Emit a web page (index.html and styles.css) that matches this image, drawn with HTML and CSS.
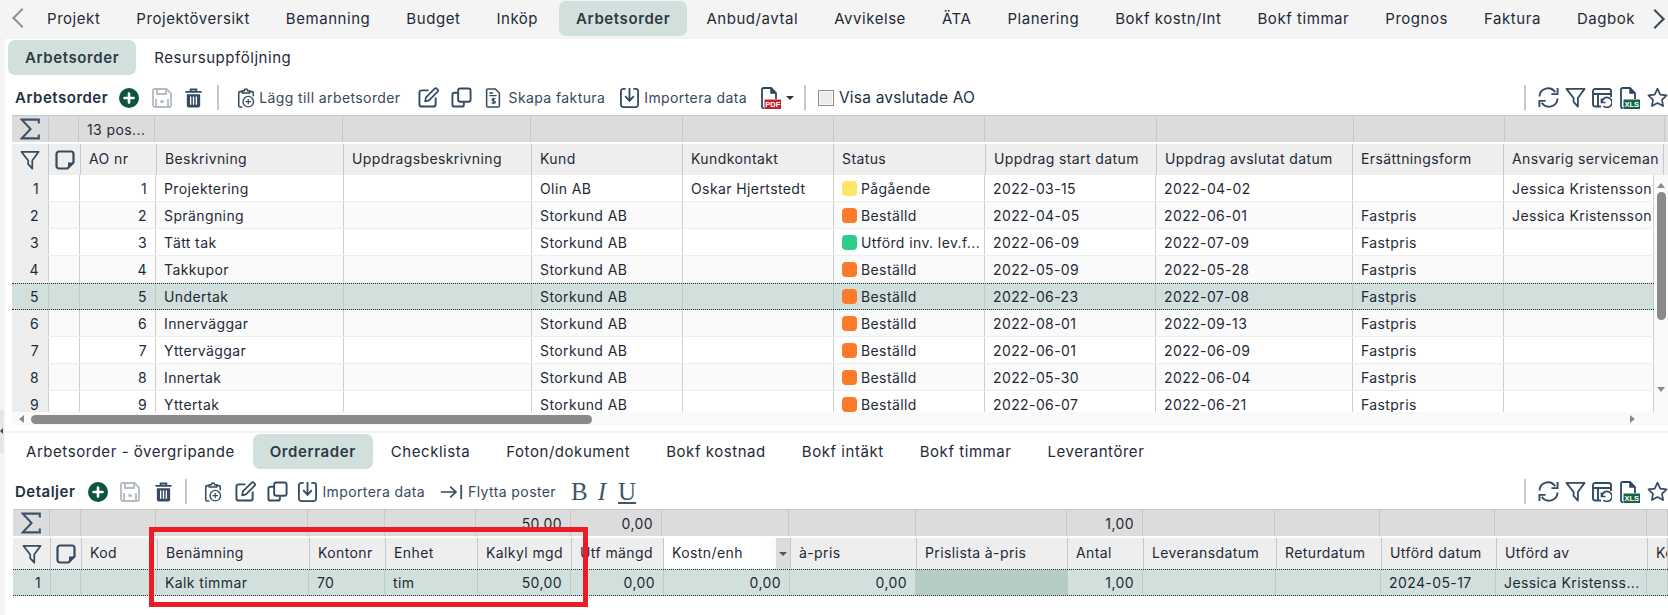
FILE: index.html
```html
<!DOCTYPE html>
<html lang="sv">
<head>
<meta charset="utf-8">
<title>Arbetsorder</title>
<link rel="stylesheet" href="styles.css">
</head>
<body>
<svg class="defs" width="0" height="0" aria-hidden="true">
  <symbol id="i-plus" viewBox="0 0 20 20"><circle cx="10" cy="10" r="10" fill="#0e5540"/><path d="M10 5.500v9M5.500 10h9" stroke="#fff" stroke-width="2.600" stroke-linecap="round"/></symbol>
  <symbol id="i-save" viewBox="0 0 20 20"><path d="M2.500 1h12l4.500 4.500V17a2 2 0 0 1-2 2H3a2 2 0 0 1-2-2V2.500A1.500 1.500 0 0 1 2.500 1zM5 1.500v4.500h9V1.500M4 11v8M16 11v8" fill="none" stroke="#b2bac4" stroke-width="1.800"/><circle cx="10" cy="13.500" r="1.800" fill="#b2bac4"/></symbol>
  <symbol id="i-trash" viewBox="0 0 20 20"><path d="M7 2.500V1h6v1.500M1.500 3.500h17" fill="none" stroke="#344b62" stroke-width="2"/><path d="M3 6h14v12a2 2 0 0 1-2 2H5a2 2 0 0 1-2-2z" fill="#344b62"/><path d="M7 8.500v8.500M10 8.500v8.500M13 8.500v8.500" stroke="#fff" stroke-width="1.400"/></symbol>
  <symbol id="i-clip" viewBox="0 0 20 22"><path d="M6 4H3.500A1.500 1.500 0 0 0 2 5.500v14A1.500 1.500 0 0 0 3.500 21H6M14 4h2.500A1.500 1.500 0 0 1 18 5.500V9" fill="none" stroke="#344b62" stroke-width="1.700"/><path d="M6 5.500V3h2.200a1.800 1.800 0 0 1 3.600 0H14v2.500z" fill="none" stroke="#344b62" stroke-width="1.700"/><circle cx="12.500" cy="15" r="5.800" fill="#fff" stroke="#344b62" stroke-width="1.500"/><path d="M12.500 12v6M9.500 15h6" stroke="#344b62" stroke-width="1.300"/></symbol>
  <symbol id="i-edit" viewBox="0 0 22 22"><path d="M11 3.500H4a2.500 2.500 0 0 0-2.500 2.500v12A2.500 2.500 0 0 0 4 20.500h12a2.500 2.500 0 0 0 2.500-2.500v-7" fill="none" stroke="#344b62" stroke-width="2"/><path d="M7.500 15l.8-4.200L17.500 1.700a1.500 1.500 0 0 1 2.100 0l1 1a1.500 1.500 0 0 1 0 2.100L11.500 14z" fill="#fff" stroke="#344b62" stroke-width="1.800" stroke-linejoin="round"/></symbol>
  <symbol id="i-copy" viewBox="0 0 22 22"><rect x="7.500" y="1.500" width="13" height="14" rx="2.200" fill="none" stroke="#344b62" stroke-width="2"/><path d="M7 6H3.500a2 2 0 0 0-2 2v10.500a2 2 0 0 0 2 2h8a2 2 0 0 0 2-2V16" fill="none" stroke="#344b62" stroke-width="2"/></symbol>
  <symbol id="i-bill" viewBox="0 0 16 22"><path d="M2.500 1h8L15 5.500V19.500a1.500 1.500 0 0 1-1.500 1.500h-11A1.500 1.500 0 0 1 1 19.500v-17A1.500 1.500 0 0 1 2.500 1z" fill="none" stroke="#344b62" stroke-width="1.700"/><path d="M4 5.500h4M4 8.500h8" stroke="#344b62" stroke-width="1.400"/><path d="M10.600 12.300c-.5-.8-3.800-1-3.800.6 0 1.800 3.900.8 3.900 2.700 0 1.600-3.500 1.400-4.100.5M8.500 10.800v7" fill="none" stroke="#344b62" stroke-width="1.300"/></symbol>
  <symbol id="i-import" viewBox="0 0 20 22"><path d="M6 2H3.500A2.500 2.500 0 0 0 1 4.500v14A2.500 2.500 0 0 0 3.500 21h13a2.500 2.500 0 0 0 2.500-2.500v-14A2.500 2.500 0 0 0 16.500 2H14" fill="none" stroke="#344b62" stroke-width="1.900"/><path d="M10 1v13M5.500 9.500 10 14.500l4.500-5" fill="none" stroke="#344b62" stroke-width="1.900"/></symbol>
  <symbol id="i-pdf" viewBox="0 0 20 22"><path d="M3 21.500A2 2 0 0 1 1 19.500v-17A1.500 1.500 0 0 1 2.500 1h7.500l5 5v6" fill="none" stroke="#2d4660" stroke-width="1.800"/><path d="M10 1v5h5" fill="#2d4660" stroke="#2d4660" stroke-width="1.500"/><rect x="3.500" y="12.500" width="16.500" height="9.500" fill="#c8202b"/><text x="11.800" y="20.300" text-anchor="middle" font-family="Liberation Sans" font-size="7.500" font-weight="700" fill="#fff">PDF</text></symbol>
  <symbol id="i-xls" viewBox="0 0 20 22"><path d="M3 21.500A2 2 0 0 1 1 19.500v-17A1.500 1.500 0 0 1 2.500 1h7.500l5 5v6" fill="none" stroke="#2d4660" stroke-width="1.800"/><path d="M10 1v5h5" fill="#2d4660" stroke="#2d4660" stroke-width="1.500"/><rect x="3.500" y="12.500" width="16.500" height="9.500" fill="#186447"/><text x="11.800" y="20.300" text-anchor="middle" font-family="Liberation Sans" font-size="7.500" font-weight="700" fill="#fff">XLS</text></symbol>
  <symbol id="i-refresh" viewBox="0 0 22 22"><path d="M1.500 10A9 9 0 0 1 18 5.500M20.500 12A9 9 0 0 1 4 16.500" fill="none" stroke="#344b62" stroke-width="2"/><path d="M20.500 1v6.500H14M1.500 21v-6.500H8" fill="none" stroke="#344b62" stroke-width="2"/></symbol>
  <symbol id="i-filter" viewBox="0 0 22 22"><path d="M1.500 2h19L13.500 11.500V20.500L9 15.500V11.500z" fill="none" stroke="#344b62" stroke-width="1.900" stroke-linejoin="round"/></symbol>
  <symbol id="i-cal" viewBox="0 0 20 20"><path d="M9 18.500H3a2 2 0 0 1-2-2V3a2 2 0 0 1 2-2h14a2 2 0 0 1 2 2v6M1 6h18M6 6v12.500" fill="none" stroke="#344b62" stroke-width="1.900"/><path d="M9.500 10.500v4H13.500M10 14.500a5 5 0 1 1 1.500 3.500" fill="none" stroke="#344b62" stroke-width="1.700"/></symbol>
  <symbol id="i-star" viewBox="0 0 22 22"><path d="M11 1.800l2.900 6.100 6.600.9-4.800 4.600 1.200 6.600-5.900-3.200-5.900 3.200 1.200-6.600L1.500 8.800l6.600-.9z" fill="none" stroke="#344b62" stroke-width="1.800" stroke-linejoin="round"/></symbol>
  <symbol id="i-sigma" viewBox="0 0 18 20"><path d="M17 5V1.500H1.500L9.500 10 1.500 18.500H17V15" fill="none" stroke="#3c5269" stroke-width="1.900"/></symbol>
  <symbol id="i-note" viewBox="0 0 20 20"><path d="M12.500 18.500H4A2.500 2.500 0 0 1 1.500 16V4A2.500 2.500 0 0 1 4 1.500h12A2.500 2.500 0 0 1 18.500 4v8.500z" fill="none" stroke="#344b62" stroke-width="2.200" stroke-linejoin="round"/><path d="M13 18v-5.500h5.500z" fill="#344b62"/></symbol>
  <symbol id="i-move" viewBox="0 0 26 18"><path d="M1 9h17M11.500 3 18 9l-6.500 6" fill="none" stroke="#344b62" stroke-width="1.900"/><path d="M24 1v16" stroke="#344b62" stroke-width="2"/></symbol>
</svg>
<div class="page">
  <nav class="topbar">
    <span class="chev chev-left"></span>
    <a class="tab tab-first">Projekt</a>
    <a class="tab">Projektöversikt</a>
    <a class="tab">Bemanning</a>
    <a class="tab">Budget</a>
    <a class="tab">Inköp</a>
    <a class="tab active">Arbetsorder</a>
    <a class="tab">Anbud/avtal</a>
    <a class="tab">Avvikelse</a>
    <a class="tab">ÄTA</a>
    <a class="tab">Planering</a>
    <a class="tab">Bokf kostn/Int</a>
    <a class="tab">Bokf timmar</a>
    <a class="tab">Prognos</a>
    <a class="tab">Faktura</a>
    <a class="tab">Dagbok</a>
    <span class="chev chev-right"></span>
  </nav>
  <div class="workspace">
    <div class="gutter"><span class="handle"></span></div>
    <main class="content">
      <div class="subtabs">
        <a class="tab active">Arbetsorder</a>
        <a class="tab">Resursuppföljning</a>
      </div>
      <div class="toolbar toolbar-top">
        <strong class="tb-title">Arbetsorder</strong>
        <svg class="ic m11"><use href="#i-plus"/></svg>
        <svg class="ic m13"><use href="#i-save"/></svg>
        <svg class="ic ic19 m12"><use href="#i-trash"/></svg>
        <span class="sep m14"></span>
        <svg class="ic m17"><use href="#i-clip"/></svg>
        <span class="tb-text m3">Lägg till arbetsorder</span>
        <svg class="ic ic21 m17"><use href="#i-edit"/></svg>
        <svg class="ic ic21 m12"><use href="#i-copy"/></svg>
        <svg class="ic m11"><use href="#i-bill"/></svg>
        <span class="tb-text m6">Skapa faktura</span>
        <svg class="ic ic21 m14"><use href="#i-import"/></svg>
        <span class="tb-text m4">Importera data</span>
        <svg class="ic ic-doc m14"><use href="#i-pdf"/></svg>
        <span class="caret m5"></span>
        <span class="sep m10"></span>
        <span class="check m12"></span>
        <span class="tb-check m5">Visa avslutade AO</span>
        <div class="tb-right">
          <span class="sep"></span>
          <svg class="ic ic21 m12"><use href="#i-refresh"/></svg>
          <svg class="ic ic21 m6"><use href="#i-filter"/></svg>
          <svg class="ic m6"><use href="#i-cal"/></svg>
          <svg class="ic ic-doc m8"><use href="#i-xls"/></svg>
          <svg class="ic ic21 m7"><use href="#i-star"/></svg>
        </div>
      </div>

      <section class="grid grid-top">
        <div class="row sum">
          <div class="c c-sym"><svg class="ic ic18"><use href="#i-sigma"/></svg></div><div class="c"></div><div class="c">13 pos...</div><div class="c"></div><div class="c"></div><div class="c"></div><div class="c"></div><div class="c"></div><div class="c"></div><div class="c"></div><div class="c"></div><div class="c"></div>
        </div>
        <div class="row head">
          <div class="c c-sym"><svg class="ic"><use href="#i-filter"/></svg></div><div class="c c-sym"><svg class="ic"><use href="#i-note"/></svg></div><div class="c">AO nr</div><div class="c">Beskrivning</div><div class="c">Uppdragsbeskrivning</div><div class="c">Kund</div><div class="c">Kundkontakt</div><div class="c">Status</div><div class="c">Uppdrag start datum</div><div class="c">Uppdrag avslutat datum</div><div class="c">Ersättningsform</div><div class="c">Ansvarig serviceman</div>
        </div>
        <div class="body-wrap">
          <div class="rows">
            <div class="row data"><div class="c idx">1</div><div class="c"></div><div class="c num">1</div><div class="c">Projektering</div><div class="c"></div><div class="c">Olin AB</div><div class="c">Oskar Hjertstedt</div><div class="c"><i class="dot yellow"></i>Pågående</div><div class="c">2022-03-15</div><div class="c">2022-04-02</div><div class="c"></div><div class="c">Jessica Kristensson</div></div>
            <div class="row data"><div class="c idx">2</div><div class="c"></div><div class="c num">2</div><div class="c">Sprängning</div><div class="c"></div><div class="c">Storkund AB</div><div class="c"></div><div class="c"><i class="dot orange"></i>Beställd</div><div class="c">2022-04-05</div><div class="c">2022-06-01</div><div class="c">Fastpris</div><div class="c">Jessica Kristensson</div></div>
            <div class="row data"><div class="c idx">3</div><div class="c"></div><div class="c num">3</div><div class="c">Tätt tak</div><div class="c"></div><div class="c">Storkund AB</div><div class="c"></div><div class="c"><i class="dot green"></i>Utförd inv. lev.f...</div><div class="c">2022-06-09</div><div class="c">2022-07-09</div><div class="c">Fastpris</div><div class="c"></div></div>
            <div class="row data"><div class="c idx">4</div><div class="c"></div><div class="c num">4</div><div class="c">Takkupor</div><div class="c"></div><div class="c">Storkund AB</div><div class="c"></div><div class="c"><i class="dot orange"></i>Beställd</div><div class="c">2022-05-09</div><div class="c">2022-05-28</div><div class="c">Fastpris</div><div class="c"></div></div>
            <div class="row data selected"><div class="c idx">5</div><div class="c"></div><div class="c num">5</div><div class="c">Undertak</div><div class="c"></div><div class="c">Storkund AB</div><div class="c"></div><div class="c"><i class="dot orange"></i>Beställd</div><div class="c">2022-06-23</div><div class="c">2022-07-08</div><div class="c">Fastpris</div><div class="c"></div></div>
            <div class="row data"><div class="c idx">6</div><div class="c"></div><div class="c num">6</div><div class="c">Innerväggar</div><div class="c"></div><div class="c">Storkund AB</div><div class="c"></div><div class="c"><i class="dot orange"></i>Beställd</div><div class="c">2022-08-01</div><div class="c">2022-09-13</div><div class="c">Fastpris</div><div class="c"></div></div>
            <div class="row data"><div class="c idx">7</div><div class="c"></div><div class="c num">7</div><div class="c">Ytterväggar</div><div class="c"></div><div class="c">Storkund AB</div><div class="c"></div><div class="c"><i class="dot orange"></i>Beställd</div><div class="c">2022-06-01</div><div class="c">2022-06-09</div><div class="c">Fastpris</div><div class="c"></div></div>
            <div class="row data"><div class="c idx">8</div><div class="c"></div><div class="c num">8</div><div class="c">Innertak</div><div class="c"></div><div class="c">Storkund AB</div><div class="c"></div><div class="c"><i class="dot orange"></i>Beställd</div><div class="c">2022-05-30</div><div class="c">2022-06-04</div><div class="c">Fastpris</div><div class="c"></div></div>
            <div class="row data"><div class="c idx">9</div><div class="c"></div><div class="c num">9</div><div class="c">Yttertak</div><div class="c"></div><div class="c">Storkund AB</div><div class="c"></div><div class="c"><i class="dot orange"></i>Beställd</div><div class="c">2022-06-07</div><div class="c">2022-06-21</div><div class="c">Fastpris</div><div class="c"></div></div>
          </div>
          <div class="vscroll"><i class="arr arr-up"></i><i class="vthumb"></i><i class="arr arr-down"></i></div>
        </div>
        <div class="hscroll"><i class="arr arr-left"></i><i class="hthumb"></i><i class="arr arr-right"></i></div>
      </section>

      <div class="divider"></div>

      <div class="subtabs subtabs-lower">
        <a class="tab">Arbetsorder - övergripande</a>
        <a class="tab active">Orderrader</a>
        <a class="tab">Checklista</a>
        <a class="tab">Foton/dokument</a>
        <a class="tab">Bokf kostnad</a>
        <a class="tab">Bokf intäkt</a>
        <a class="tab">Bokf timmar</a>
        <a class="tab">Leverantörer</a>
      </div>
      <div class="toolbar toolbar-lower">
        <strong class="tb-title">Detaljer</strong>
        <svg class="ic m13"><use href="#i-plus"/></svg>
        <svg class="ic m12"><use href="#i-save"/></svg>
        <svg class="ic ic19 m14"><use href="#i-trash"/></svg>
        <span class="sep m12"></span>
        <svg class="ic m16"><use href="#i-clip"/></svg>
        <svg class="ic ic21 m12"><use href="#i-edit"/></svg>
        <svg class="ic ic21 m11"><use href="#i-copy"/></svg>
        <svg class="ic ic21 m9"><use href="#i-import"/></svg>
        <span class="tb-text m4">Importera data</span>
        <svg class="ic ic-move m15"><use href="#i-move"/></svg>
        <span class="tb-text m5">Flytta poster</span>
        <span class="fmt fmt-b m15">B</span>
        <span class="fmt fmt-i m7">I</span>
        <span class="fmt fmt-u m9">U</span>
        <div class="tb-right">
          <span class="sep"></span>
          <svg class="ic ic21 m12"><use href="#i-refresh"/></svg>
          <svg class="ic ic21 m6"><use href="#i-filter"/></svg>
          <svg class="ic m6"><use href="#i-cal"/></svg>
          <svg class="ic ic-doc m8"><use href="#i-xls"/></svg>
          <svg class="ic ic21 m7"><use href="#i-star"/></svg>
        </div>
      </div>

      <section class="grid grid-lower">
        <div class="row sum">
          <div class="c c-sym"><svg class="ic ic18"><use href="#i-sigma"/></svg></div><div class="c"></div><div class="c"></div><div class="c"></div><div class="c"></div><div class="c"></div><div class="c num">50,00</div><div class="c num">0,00</div><div class="c"></div><div class="c"></div><div class="c"></div><div class="c num">1,00</div><div class="c"></div><div class="c"></div><div class="c"></div><div class="c"></div><div class="c"></div>
        </div>
        <div class="row head">
          <div class="c c-sym"><svg class="ic"><use href="#i-filter"/></svg></div><div class="c c-sym"><svg class="ic"><use href="#i-note"/></svg></div><div class="c">Kod</div><div class="c">Benämning</div><div class="c">Kontonr</div><div class="c">Enhet</div><div class="c">Kalkyl mgd</div><div class="c">Utf mängd</div><div class="c c-sort">Kostn/enh<span class="sort-btn"><i class="caret"></i></span></div><div class="c">à-pris</div><div class="c">Prislista à-pris</div><div class="c">Antal</div><div class="c">Leveransdatum</div><div class="c">Returdatum</div><div class="c">Utförd datum</div><div class="c">Utförd av</div><div class="c">Kod</div>
        </div>
        <div class="row data selected">
          <div class="c idx">1</div><div class="c"></div><div class="c"></div><div class="c">Kalk timmar</div><div class="c">70</div><div class="c">tim</div><div class="c num">50,00</div><div class="c num">0,00</div><div class="c num">0,00</div><div class="c num">0,00</div><div class="c c-dark"></div><div class="c num">1,00</div><div class="c"></div><div class="c"></div><div class="c">2024-05-17</div><div class="c">Jessica Kristenss...</div><div class="c"></div>
        </div>
      </section>
    </main>
  </div>
  <div class="callout"></div>
</div>
</body>
</html>
```

FILE: styles.css
```css
* { box-sizing: border-box; }
html, body { margin: 0; height: 615px; overflow: hidden; background: #fff; }
body { font-family: Inter, "Noto Sans", sans-serif; font-size: 14px; color: #1f2a38; }
.defs { position: absolute; }
.page { position: relative; height: 615px; overflow: hidden; }

.topbar { display: flex; align-items: center; height: 39px; background: #f4f4f4; padding-bottom: 3px; position: relative; }
.tab { display: flex; align-items: center; height: 35px; padding: 0 18px; font-size: 15px; letter-spacing: .55px; white-space: nowrap; border-radius: 7px; color: #1f2a38; }
.tab.active { background: #d2e0dd; font-weight: 600; color: #2c3a44; padding: 0 17px; letter-spacing: .6px; }
.tab-first { margin-left: 0; }
.topbar .tab { flex: none; }
.topbar .tab.active { margin: 0 1px 0 3px; }
.chev { width: 14px; height: 14px; border-left: 2px solid #8b929a; border-bottom: 2px solid #8b929a; flex: none; }
.chev-left { transform: rotate(45deg); margin-left: 15px; }
.chev-right { transform: rotate(225deg); border-color: #3c4a58; position: absolute; right: 6px; top: 12px; }

.workspace { display: flex; height: 576px; }
.gutter { width: 5px; flex: none; background: #f4f4f4; position: relative; }
.handle { position: absolute; left: 0; top: 371px; width: 4px; height: 43px; background: #e6e6e6; }
.handle::after { content: ""; position: absolute; left: 0; top: 18px; border: 3px solid transparent; border-right-color: #3c4a58; border-left: 0; }
.content { flex: 1; min-width: 0; }

.subtabs { display: flex; height: 35px; margin: 1px 0 0 3px; }
.subtabs-lower { margin: 0 0 0 3px; }

.toolbar { display: flex; align-items: center; height: 40px; padding: 5px 0 0 10px; }
.tb-title { font-size: 15px; font-weight: 600; color: #22303f; letter-spacing: .5px; }
.tb-text { font-size: 14px; color: #36495d; white-space: nowrap; letter-spacing: .4px; }
.tb-check { font-size: 15.5px; color: #22303f; white-space: nowrap; letter-spacing: .2px; }
.tb-right { display: flex; align-items: center; position: relative; margin-left: auto; }
.ic { display: block; flex: none; width: 20px; height: 20px; }
.ic18 { width: 20px; height: 22px; }
.ic19 { width: 19px; height: 20px; }
.ic21 { width: 21px; height: 21px; }
.ic-doc { width: 20px; height: 22px; }
.ic-move { width: 23px; height: 18px; }
.sep { display: block; flex: none; width: 2px; height: 25px; background: #c8c8c8; }
.caret { display: block; flex: none; width: 0; height: 0; border: 4px solid transparent; border-top: 4px solid #2a3644; border-bottom: 0; }
.check { display: block; flex: none; width: 16px; height: 16px; border: 1px solid #8e8e8e; background: #ececec; box-shadow: inset 0 0 0 1px #fafafa; }
.fmt { font-family: "Liberation Serif", serif; font-size: 25px; line-height: 24px; color: #3f566e; }
.fmt-i { font-style: italic; padding: 0 3px; }
.fmt-u { text-decoration: underline; text-underline-offset: 2px; }
.m3 { margin-left: 3px; } .m4 { margin-left: 4px; } .m5 { margin-left: 5px; } .m6 { margin-left: 6px; } .m7 { margin-left: 7px; }
.m8 { margin-left: 8px; } .m9 { margin-left: 9px; } .m10 { margin-left: 10px; } .m11 { margin-left: 11px; }
.m12 { margin-left: 12px; } .m13 { margin-left: 13px; } .m14 { margin-left: 14px; } .m15 { margin-left: 15px; }
.m16 { margin-left: 16px; } .m17 { margin-left: 17px; }

.grid { overflow: hidden; }
.grid-top { margin-left: 7px; height: 311px; }
.grid-lower { margin-left: 8px; }
.row { display: grid; }
.c { display: flex; align-items: center; min-width: 0; padding: 0 8px; font-size: 14px; letter-spacing: .4px; white-space: nowrap; overflow: hidden; border-right: 1px solid #c8c8c8; }
.c-sym { justify-content: center; padding: 0; }
.num { justify-content: flex-end; }
.sum { height: 28px; background: #dcdcdc; border-top: 1px solid #c8c8c8; border-bottom: 1px solid #fff; }
.sum .c { background: #dcdcdc; }
.head { height: 32px; background: #eee; border-top: 1px solid #fff; }
.head .c { background: #eee; padding-bottom: 3px; }
.head .c-sym { padding-bottom: 0; }
.data { height: 27px; background: #fff; border-bottom: 1px solid #eee; }
.rows .data:nth-child(even) { background: #fafafa; }
.data .c { border-right-color: #cfcfcf; }
.idx { justify-content: flex-end; padding-right: 9px; background: #eee; }
.data.selected, .rows .data.selected:nth-child(even) { background: #d2e0dd; border-top: 1px dotted #17382f; border-bottom: 1px dotted #17382f; }
.selected .idx { background: #d2e0dd; }
.selected .c { border-right-color: #bfcbc8; }
.c-dark { background: #b5cbc5; }

.grid-top .sum { grid-template-columns: 37px 30px 76px 188px 188px 152px 151px 151px 172px 197px 151px 160px; }
.grid-top .head { grid-template-columns: 37px 32px 76px 187px 188px 151px 151px 152px 171px 196px 151px 160px; }
.grid-top .data { grid-template-columns: 37px 31px 76px 188px 188px 151px 151px 151px 171px 197px 151px 150px; }
.body-wrap { display: flex; height: 237px; overflow: hidden; }
.rows { flex: 1; min-width: 0; overflow: hidden; }
.vscroll { display: flex; flex-direction: column; align-items: center; width: 14px; flex: none; background: #fafafa; padding-top: 8px; }
.vthumb { display: block; width: 9px; height: 128px; margin-top: 4px; border-radius: 5px; background: #8a8a8a; }
.arr { display: block; width: 0; height: 0; border: 4px solid transparent; flex: none; }
.arr-up { border-top: 0; border-bottom: 5px solid #8a8a8a; }
.arr-down { border-bottom: 0; border-top: 5px solid #8a8a8a; margin-top: 67px; }
.hscroll { display: flex; align-items: center; height: 14px; background: #fafafa; padding-left: 7px; }
.hthumb { display: block; width: 561px; height: 9px; margin-left: 7px; border-radius: 5px; background: #8a8a8a; }
.arr-left { border-left: 0; border-right: 5px solid #8a8a8a; }
.arr-right { border-right: 0; border-left: 5px solid #8a8a8a; margin-left: 1038px; }
.dot { display: block; flex: none; width: 15px; height: 15px; margin-right: 4px; border-radius: 4px; }
.yellow { background: #ffe566; }
.orange { background: #fb7b2b; }
.green { background: #2fcc8b; }

.divider { height: 2px; margin-top: 5px; margin-bottom: 1px; background: #f4f4f4; }

.grid-lower .sum { grid-template-columns: 37px 31px 75px 152px 77px 91px 95px 91px 127px 127px 151px 76px 132px 105px 115px 152px 21px; }
.grid-lower .head { grid-template-columns: 38px 31px 76px 152px 76px 92px 94px 92px 127px 126px 151px 76px 133px 105px 115px 151px 20px; }
.grid-lower .data { grid-template-columns: 38px 30px 76px 152px 76px 93px 93px 93px 126px 126px 152px 75px 133px 105px 115px 151px 21px; }
.c-sort { position: relative; background: linear-gradient(90deg, #fff 80%, #f2f2f2) !important; }
.sort-btn { position: absolute; right: 0; top: 0; bottom: 0; width: 14px; display: flex; align-items: center; justify-content: center; background: #dcdcdc; }
.sort-btn .caret { border-top-color: #555; }
.callout { position: absolute; left: 149px; top: 527px; width: 439px; height: 80px; border: 5px solid #ed1c24; pointer-events: none; }
```
